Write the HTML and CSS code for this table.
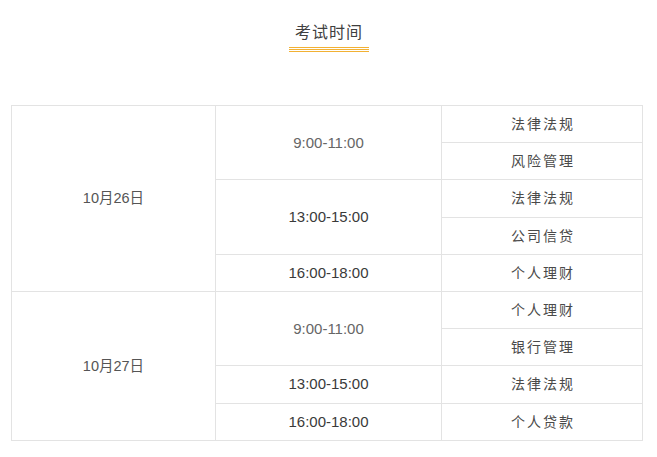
FILE: index.html
```html
<!DOCTYPE html>
<html lang="zh-CN">
<head>
<meta charset="utf-8">
<title>考试时间</title>
<link rel="stylesheet" href="styles.css">
</head>
<body>
<div class="heading">
  <div class="heading-text">考试时间</div>
  <div class="heading-rule"></div>
</div>
<table class="schedule">
  <colgroup>
    <col class="c-date"><col class="c-time"><col class="c-subj">
  </colgroup>
  <tbody>
    <tr>
      <td rowspan="5" class="date">10月26日</td>
      <td rowspan="2" class="time light">9:00-11:00</td>
      <td class="subj">法律法规</td>
    </tr>
    <tr><td class="subj">风险管理</td></tr>
    <tr>
      <td rowspan="2" class="time">13:00-15:00</td>
      <td class="subj">法律法规</td>
    </tr>
    <tr><td class="subj">公司信贷</td></tr>
    <tr>
      <td class="time">16:00-18:00</td>
      <td class="subj">个人理财</td>
    </tr>
    <tr>
      <td rowspan="4" class="date">10月27日</td>
      <td rowspan="2" class="time light">9:00-11:00</td>
      <td class="subj">个人理财</td>
    </tr>
    <tr><td class="subj">银行管理</td></tr>
    <tr>
      <td class="time">13:00-15:00</td>
      <td class="subj">法律法规</td>
    </tr>
    <tr>
      <td class="time">16:00-18:00</td>
      <td class="subj">个人贷款</td>
    </tr>
  </tbody>
</table>
</body>
</html>
```
FILE: styles.css
```css
html, body {
  margin: 0;
  padding: 0;
  background: #ffffff;
}
body {
  font-family: "Liberation Sans", "Noto Sans CJK SC", sans-serif;
  color: #595959;
}
.heading {
  display: flex;
  flex-direction: column;
  align-items: center;
  padding-top: 23px;
  height: 83px;
  box-sizing: border-box;
}
.heading-text {
  font-size: 16px;
  line-height: 20px;
  color: #3f3f3f;
  letter-spacing: 1px;
  padding-left: 1px;
}
.heading-rule {
  margin-top: 4px;
  width: 80px;
  height: 5px;
  background: repeating-linear-gradient(to bottom, #f2b134 0 1px, transparent 1px 2px);
}
.schedule {
  margin-top: 22px;
  margin-left: 11px;
  width: 631px;
  border-collapse: collapse;
  table-layout: fixed;
  font-size: 15px;
  line-height: 18px;
}
.c-date { width: 204px; }
.c-time { width: 226px; }
.c-subj { width: 201px; }
.schedule td {
  border: 1px solid #e3e3e3;
  height: 36.2px;
  padding: 0;
  text-align: center;
  vertical-align: middle;
}
.date {
  font-size: 14.5px;
  color: #555555;
}
.time {
  color: #3a3a3a;
}
.time.light {
  color: #666666;
}
.schedule td.subj {
  font-size: 14px;
  letter-spacing: 2px;
  padding-left: 2px;
  color: #4a4a4a;
}
```
